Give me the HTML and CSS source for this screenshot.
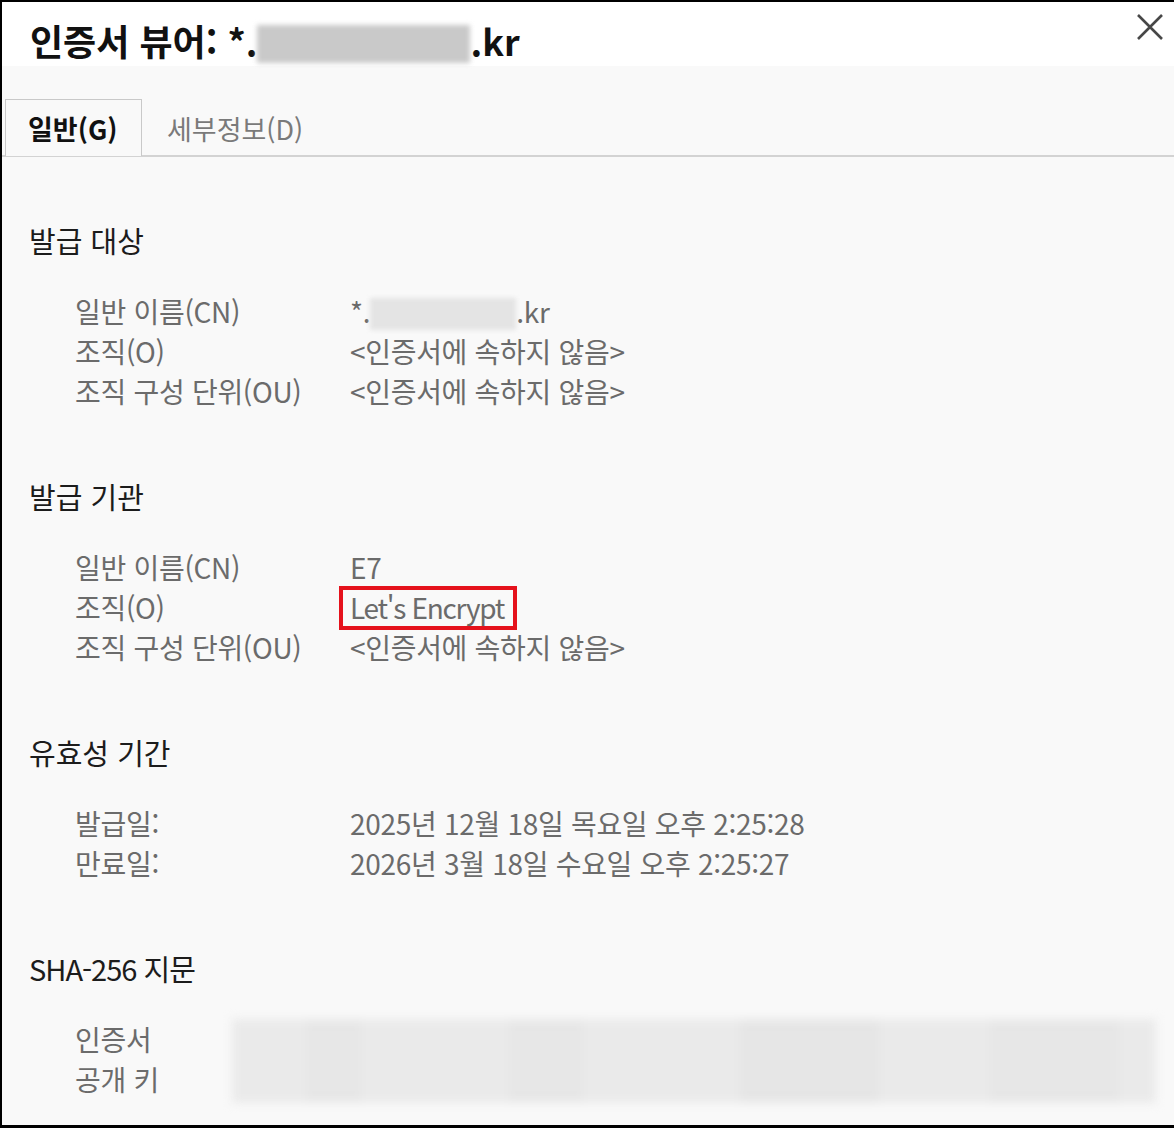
FILE: index.html
```html
<!DOCTYPE html>
<html lang="ko">
<head>
    <meta charset="UTF-8">
    <title>인증서 뷰어</title>
    <link rel="stylesheet" href="styles.css">
</head>
<body>
<div class="viewer">
    <header class="titlebar">
        <h1>인증서 뷰어: *.<span class="blur blur-title"></span>.kr</h1>
        <button class="close" title="닫기">
            <svg width="28" height="28" viewBox="0 0 28 28">
                <path d="M2 2 L26 26 M26 2 L2 26" stroke="#474747" stroke-width="2.6" fill="none"/>
            </svg>
        </button>
    </header>

    <nav class="tabs">
        <div class="tab active">일반(G)</div>
        <div class="tab">세부정보(D)</div>
    </nav>

    <main class="content">
        <section class="group">
            <h2>발급 대상</h2>
            <dl class="fields">
                <dt>일반 이름(CN)</dt>
                <dd>*.<span class="blur blur-name"></span>.kr</dd>
                <dt>조직(O)</dt>
                <dd>&lt;인증서에 속하지 않음&gt;</dd>
                <dt>조직 구성 단위(OU)</dt>
                <dd>&lt;인증서에 속하지 않음&gt;</dd>
            </dl>
        </section>

        <section class="group">
            <h2>발급 기관</h2>
            <dl class="fields">
                <dt>일반 이름(CN)</dt>
                <dd>E7</dd>
                <dt>조직(O)</dt>
                <dd><span class="marked">Let's Encrypt</span></dd>
                <dt>조직 구성 단위(OU)</dt>
                <dd>&lt;인증서에 속하지 않음&gt;</dd>
            </dl>
        </section>

        <section class="group">
            <h2>유효성 기간</h2>
            <dl class="fields">
                <dt>발급일:</dt>
                <dd>2025년 12월 18일 목요일 오후 2:25:28</dd>
                <dt>만료일:</dt>
                <dd>2026년 3월 18일 수요일 오후 2:25:27</dd>
            </dl>
        </section>

        <section class="group">
            <h2 class="latin">SHA-256 지문</h2>
            <dl class="fields prints">
                <dt>인증서</dt>
                <dt>공개 키</dt>
                <dd class="blur blur-prints" aria-hidden="true"></dd>
            </dl>
        </section>
    </main>
</div>
</body>
</html>
```

FILE: styles.css
```css
body {
    margin: 0;
    background: #fff;
    font-family: "Noto Sans CJK KR", sans-serif;
}

.viewer {
    width: 1174px;
    height: 1128px;
    box-sizing: border-box;
    border-top: 2px solid #000;
    border-left: 2px solid #000;
    border-bottom: 3px solid #000;
    background: #f9f9f9;
    overflow: hidden;
}

/* title */
.titlebar {
    height: 64px;
    background: #fff;
    display: flex;
    align-items: flex-start;
    padding: 0 10px 0 28px;
}

.titlebar h1 {
    margin: 0;
    padding-top: 16px;
    font-size: 36px;
    line-height: 44px;
    font-weight: bold;
    color: #111;
}

.close {
    margin-left: auto;
    margin-top: 11px;
    padding: 0;
    border: none;
    background: none;
    width: 28px;
    height: 28px;
}

.close svg {
    display: block;
}

/* blurred parts */
.blur {
    display: inline-block;
    vertical-align: middle;
}

.blur-title {
    width: 213px;
    height: 38px;
    margin-top: -4px;
    background: #c9c9c9;
    filter: blur(2.5px);
}

.blur-name {
    width: 146px;
    height: 32px;
    margin-top: -2px;
    background: #e4e4e4;
    filter: blur(2px);
}

/* tabs */
.tabs {
    display: flex;
    padding: 33px 0 0 3px;
    border-bottom: 2px solid #d3d3d3;
}

.tab {
    height: 57px;
    padding: 0 23px 0 24px;
    margin-bottom: -2px;
    border: 1px solid transparent;
    border-bottom: none;
    display: flex;
    align-items: center;
    font-size: 27px;
    color: #7a7a7a;
}

.tab.active {
    width: 137px;
    box-sizing: border-box;
    padding-left: 22px;
    border-color: #c9c9c9;
    background: #f9f9f9;
    font-weight: bold;
    color: #111;
}

/* sections */
.content {
    padding: 63px 0 0 27px;
}

.group {
    margin-bottom: 65px;
}

.group h2 {
    margin: 0;
    font-size: 29px;
    line-height: 40px;
    font-weight: normal;
    color: #1c1c1c;
}

.group h2.latin {
    letter-spacing: -1px;
}

.fields {
    display: grid;
    grid-template-columns: 275px 1fr;
    grid-auto-rows: 40px;
    margin: 31px 0 0;
    padding-left: 46px;
    font-size: 28px;
    line-height: 40px;
    color: #6b6b6b;
    letter-spacing: -0.3px;
}

.fields dt,
.fields dd {
    margin: 0;
    white-space: nowrap;
}

.marked {
    position: relative;
    letter-spacing: -1.3px;
}

.marked::after {
    content: "";
    position: absolute;
    left: -11px;
    width: 178px;
    top: -1px;
    bottom: -3px;
    box-sizing: border-box;
    border: 4px solid #e5121c;
}

.prints {
    grid-template-columns: 157px 924px;
}

.prints dt {
    grid-column: 1;
}

.blur-prints {
    grid-column: 2;
    grid-row: 1 / span 2;
    height: 84px;
    margin-top: -1px;
    background:
        linear-gradient(90deg, transparent 0 8%, rgba(0,0,0,0.015) 8% 14%, transparent 14% 30%,
            rgba(0,0,0,0.015) 30% 38%, transparent 38% 55%, rgba(0,0,0,0.02) 55% 70%,
            transparent 70% 82%, rgba(0,0,0,0.015) 82% 96%, transparent 96%),
        #eaeaea;
    filter: blur(5px);
}
```
